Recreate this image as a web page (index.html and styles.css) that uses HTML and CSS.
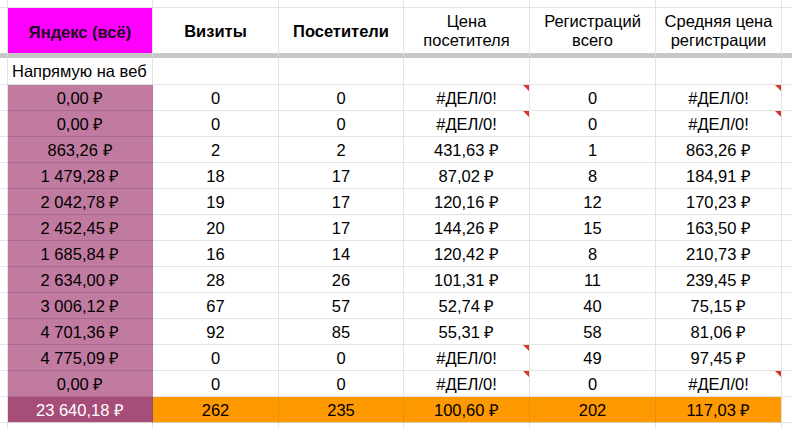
FILE: index.html
```html
<!DOCTYPE html>
<html lang="ru">
<head>
<meta charset="utf-8">
<title>Яндекс (всё)</title>
<link rel="stylesheet" href="styles.css">
</head>
<body>
<table class="sheet">
  <colgroup>
    <col class="w-stub-l"><col class="w-first"><col class="w-126"><col class="w-125"><col class="w-126"><col class="w-126"><col class="w-126"><col class="w-stub-r">
  </colgroup>
  <tr class="r-top"><td></td><td></td><td></td><td></td><td></td><td></td><td></td><td></td></tr>
  <tr class="r-head">
    <td></td>
    <th class="ya">Яндекс (всё)</th>
    <th class="bold">Визиты</th>
    <th class="bold">Посетители</th>
    <th>Цена посетителя</th>
    <th>Регистраций всего</th>
    <th>Средняя цена регистрации</th>
    <td></td>
  </tr>
  <tr class="r-group">
    <td></td><td class="left">Напрямую на веб</td><td></td><td></td><td></td><td></td><td></td><td></td>
  </tr>
  <tr><td></td><td class="pink">0,00&nbsp;₽</td><td>0</td><td>0</td><td class="err">#ДЕЛ/0!</td><td>0</td><td class="err">#ДЕЛ/0!</td><td></td></tr>
  <tr><td></td><td class="pink">0,00&nbsp;₽</td><td>0</td><td>0</td><td class="err">#ДЕЛ/0!</td><td>0</td><td class="err">#ДЕЛ/0!</td><td></td></tr>
  <tr><td></td><td class="pink">863,26&nbsp;₽</td><td>2</td><td>2</td><td>431,63&nbsp;₽</td><td>1</td><td>863,26&nbsp;₽</td><td></td></tr>
  <tr><td></td><td class="pink">1&nbsp;479,28&nbsp;₽</td><td>18</td><td>17</td><td>87,02&nbsp;₽</td><td>8</td><td>184,91&nbsp;₽</td><td></td></tr>
  <tr><td></td><td class="pink">2&nbsp;042,78&nbsp;₽</td><td>19</td><td>17</td><td>120,16&nbsp;₽</td><td>12</td><td>170,23&nbsp;₽</td><td></td></tr>
  <tr><td></td><td class="pink">2&nbsp;452,45&nbsp;₽</td><td>20</td><td>17</td><td>144,26&nbsp;₽</td><td>15</td><td>163,50&nbsp;₽</td><td></td></tr>
  <tr><td></td><td class="pink">1&nbsp;685,84&nbsp;₽</td><td>16</td><td>14</td><td>120,42&nbsp;₽</td><td>8</td><td>210,73&nbsp;₽</td><td></td></tr>
  <tr><td></td><td class="pink">2&nbsp;634,00&nbsp;₽</td><td>28</td><td>26</td><td>101,31&nbsp;₽</td><td>11</td><td>239,45&nbsp;₽</td><td></td></tr>
  <tr><td></td><td class="pink">3&nbsp;006,12&nbsp;₽</td><td>67</td><td>57</td><td>52,74&nbsp;₽</td><td>40</td><td>75,15&nbsp;₽</td><td></td></tr>
  <tr><td></td><td class="pink">4&nbsp;701,36&nbsp;₽</td><td>92</td><td>85</td><td>55,31&nbsp;₽</td><td>58</td><td>81,06&nbsp;₽</td><td></td></tr>
  <tr><td></td><td class="pink">4&nbsp;775,09&nbsp;₽</td><td>0</td><td>0</td><td class="err">#ДЕЛ/0!</td><td>49</td><td>97,45&nbsp;₽</td><td></td></tr>
  <tr><td></td><td class="pink">0,00&nbsp;₽</td><td>0</td><td>0</td><td class="err">#ДЕЛ/0!</td><td>0</td><td class="err">#ДЕЛ/0!</td><td></td></tr>
  <tr class="r-total"><td></td><td class="dark">23&nbsp;640,18&nbsp;₽</td><td class="orange">262</td><td class="orange">235</td><td class="orange">100,60&nbsp;₽</td><td class="orange">202</td><td class="orange last">117,03&nbsp;₽</td><td></td></tr>
  <tr class="r-bottom"><td></td><td></td><td></td><td></td><td></td><td></td><td></td><td></td></tr>
</table>
</body>
</html>
```

FILE: styles.css
```css
html, body {
  margin: 0;
  padding: 0;
  background: #ffffff;
  overflow: hidden;
}

.sheet {
  table-layout: fixed;
  width: 792px;
  border-collapse: separate;
  border-spacing: 0;
  font-family: "Liberation Sans", Arial, sans-serif;
  font-size: 16.5px;
  line-height: 19px;
  color: #000000;
}

.w-stub-l { width: 8px; }
.w-first { width: 145px; }
.w-126 { width: 126px; }
.w-125 { width: 125px; }
.w-stub-r { width: 10px; }

.sheet td,
.sheet th {
  box-sizing: border-box;
  padding: 2px 3px 0 3px;
  border-right: 1px solid #e2e3e3;
  border-bottom: 1px solid #e2e3e3;
  text-align: center;
  vertical-align: middle;
  white-space: nowrap;
  overflow: hidden;
  position: relative;
  height: 26px;
}

.sheet td:last-child {
  border-right: none;
}

.r-top td {
  height: 8px;
  padding: 0;
}

.r-head th,
.r-head td {
  height: 50px;
  border-bottom: 5px solid #c7c7c7;
  font-weight: normal;
  white-space: normal;
  padding: 1px 4px 0 4px;
}

.r-head th.bold {
  font-weight: bold;
}

.r-head th.ya {
  background: #ff00ff;
  font-weight: bold;
  color: #1c0a1c;
  padding-top: 3px;
}

.r-group td {
  height: 27px;
  padding-top: 1px;
}

.sheet td.left {
  text-align: left;
  padding-left: 4px;
}

.sheet td.pink {
  background: #c27ba0;
  border-right-color: #b8749a;
  border-bottom-color: #ad6890;
}

.sheet td.dark {
  background: #a64d79;
  color: #ffffff;
  border-right-color: #9a4a70;
  border-bottom-color: #d4d0d2;
}

.sheet td.orange {
  background: #ff9900;
  border-right-color: #e8900f;
  border-bottom-color: #d8cdb9;
}

.sheet td.orange.last {
  border-right-color: #e2e3e3;
}

.sheet td.err::after {
  content: "";
  position: absolute;
  top: 0;
  right: 0;
  width: 0;
  height: 0;
  border-top: 6px solid #d9362b;
  border-left: 6px solid transparent;
}

.r-bottom td {
  height: 8px;
  padding: 0;
}
```
